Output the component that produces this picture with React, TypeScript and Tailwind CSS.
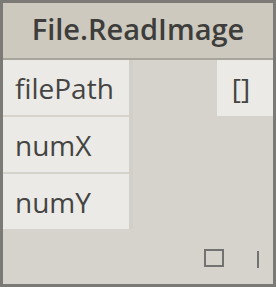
const FONT = { fontFamily: '"Open Sans", "Noto Sans", sans-serif' };

const INPUTS = ["filePath", "numX", "numY"];

function InputRow({ label }: { label: string }) {
  return (
    <div className="flex h-[55px] items-center bg-[#ebeae6] pl-3 text-[28px] leading-none text-[#444442]">
      {label}
    </div>
  );
}

export default function App() {
  return (
    <div
      className="flex h-[287px] w-[276px] flex-col border-[3px] border-[#7b7a76] bg-[#d6d3cc]"
      style={FONT}
    >
      <div className="flex h-[57px] items-center justify-center border-b-2 border-[#a8a59d] bg-[#cdc9be] pb-1 text-[29px] font-semibold text-[#3d3d3b]">
        File.ReadImage
      </div>

      <div className="flex">
        <div className="flex w-[126px] flex-col gap-[2px]">
          {INPUTS.map((name) => (
            <InputRow key={name} label={name} />
          ))}
        </div>
        <div className="w-[4px] bg-[#d2cfc8]" />
        <div className="flex-1" />
        <div className="flex h-[56px] w-[56px] items-center justify-center bg-[#ebeae6] pr-2 text-[28px] leading-none text-[#444442]">
          []
        </div>
      </div>

      <div className="flex flex-1 items-end justify-end gap-[33px] pr-[14px] pb-[16px]">
        <div className="mb-[1px] h-[18px] w-[20px] border-2 border-[#737270]" />
        <div className="h-[17px] w-[2px] bg-[#737270]" />
      </div>
    </div>
  );
}
